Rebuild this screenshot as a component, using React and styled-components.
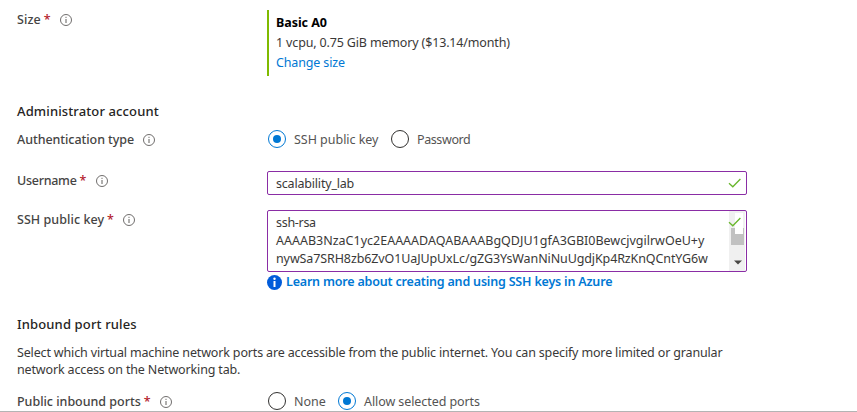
import React from 'react';
import styled, { createGlobalStyle } from 'styled-components';

const GlobalStyle = createGlobalStyle`
  *, *::before, *::after { box-sizing: border-box; }
  body {
    margin: 0;
    background: #fff;
    color: #3a3938;
    font-family: "Noto Sans", "Open Sans", sans-serif;
    font-size: 12.5px;
    line-height: 20px;
  }
`;

const Page = styled.main`
  display: flex;
  flex-direction: column;
  height: 412px;
  overflow: hidden;
  padding: 10px 0 0 17px;
  border-bottom: 1px solid #b4b4b4;
`;

const Text = styled.span`
  letter-spacing: ${(p) => p.$track || 0}px;
  white-space: nowrap;
`;

const Row = styled.div`
  display: grid;
  grid-template-columns: 250px 480px;
  flex: none;
  margin-top: ${(p) => p.$gap || 0}px;
`;

const Label = styled.div`
  display: flex;
  align-items: center;
  height: 20px;
  color: #454443;
  font-weight: 500;
`;

const Required = styled.span`
  width: 7px;
  margin-left: 3px;
  color: #b3202c;
  font-weight: 500;
`;

const InfoSvg = styled.svg`
  flex: none;
  width: 12px;
  height: 12px;
  margin-left: ${(p) => p.$gap}px;
  overflow: visible;
`;

const Heading = styled.h2`
  flex: none;
  height: 20px;
  margin: ${(p) => p.$gap}px 0 0;
  color: #252423;
  font-size: 13px;
  font-weight: 500;
  line-height: 20px;
  letter-spacing: ${(p) => p.$track}px;
`;

const SizeCard = styled.div`
  display: flex;
  flex-direction: column;
  height: 66px;
  padding: 3px 0 0 7px;
  border-left: 2px solid #7fba00;
`;

const SizeName = styled(Text)`
  color: #000;
  font-weight: 700;
`;

const Link = styled.a`
  color: #0078d4;
  letter-spacing: ${(p) => p.$track || 0}px;
  font-weight: ${(p) => (p.$strong ? 600 : 400)};
  white-space: nowrap;
`;

const Options = styled.div`
  display: flex;
  align-items: center;
  height: 18px;
  padding-left: 1px;
`;

const Option = styled.label`
  display: flex;
  align-items: center;
  height: 18px;
  width: ${(p) => p.$width}px;
  gap: 8px;
  color: #555453;
`;

const OptionText = styled(Text)`
  padding-top: 2px;
`;

const Radio = styled.span`
  display: grid;
  place-items: center;
  flex: none;
  width: 18px;
  height: 18px;
  border: 1px solid ${(p) => (p.$on ? '#0078d4' : '#323130')};
  border-radius: 50%;
  &::after {
    content: "";
    width: 8px;
    height: 8px;
    border-radius: 50%;
    background: ${(p) => (p.$on ? '#0078d4' : 'transparent')};
  }
`;

const Field = styled.div`
  position: relative;
  display: flex;
  justify-content: space-between;
  height: ${(p) => p.$height}px;
  padding-left: 8px;
  border: 1px solid #8a2da5;
  border-radius: 2px;
  line-height: ${(p) => p.$line}px;
`;

const KeyLines = styled.div`
  display: flex;
  flex-direction: column;
  padding-top: 3px;
`;

const Scrollbar = styled.div`
  display: flex;
  flex-direction: column;
  align-items: center;
  justify-content: space-between;
  width: 16px;
  height: 60px;
  margin-right: 1px;
  padding: 17px 1px 6px 2px;
  background: #f0f0f0;
`;

const Thumb = styled.div`
  width: 13px;
  height: 17px;
  background: #c1c1c1;
`;

const CheckBacking = styled.span`
  position: absolute;
  top: 2px;
  right: 3px;
  width: 8px;
  height: 21px;
  background: #fff;
`;

const CheckSvg = styled.svg`
  position: absolute;
  top: 6px;
  right: 4px;
  width: 14px;
  height: 10px;
`;

const Help = styled.div`
  display: flex;
  align-items: center;
  gap: 4px;
  flex: none;
  height: 20px;
  padding-left: 250px;
`;

const Paragraph = styled.p`
  display: flex;
  flex-direction: column;
  flex: none;
  margin: 10px 0 0;
  line-height: 17px;
`;

function Info({ gap = 9 }) {
  return (
    <InfoSvg viewBox="0 0 12 12" $gap={gap}>
      <circle cx="6" cy="6" r="5.5" fill="none" stroke="#605e5c" strokeWidth="0.9" />
      <path d="M6 5v4M6 2.8v1.1" stroke="#605e5c" strokeWidth="1" />
    </InfoSvg>
  );
}

function Check() {
  return (
    <CheckSvg viewBox="0 0 14 10">
      <path d="M1 5.2 4.8 8.8 12.4 1" fill="none" stroke="#68b62c" strokeWidth="1.3" />
    </CheckSvg>
  );
}

function FieldLabel({ text, track, required, gap }) {
  return (
    <Label>
      <Text $track={track}>{text}</Text>
      {required && <Required>*</Required>}
      <Info gap={gap} />
    </Label>
  );
}

function RadioOption({ on, width, track, children }) {
  return (
    <Option $width={width}>
      <Radio $on={on} />
      <OptionText $track={track}>{children}</OptionText>
    </Option>
  );
}

export default function App() {
  return (
    <>
      <GlobalStyle />
      <Page>
        <Row>
          <FieldLabel text="Size" track={0.1} required />
          <SizeCard>
            <SizeName $track={-0.05}>Basic A0</SizeName>
            <Text $track={-0.155}>1 vcpu, 0.75 GiB memory ($13.14/month)</Text>
            <Link $track={-0.14}>Change size</Link>
          </SizeCard>
        </Row>

        <Heading $gap={25} $track={0.12}>Administrator account</Heading>
        <Row $gap={9}>
          <FieldLabel text="Authentication type" track={-0.06} gap={9} />
          <Options>
            <RadioOption on width={123} track={-0.03}>SSH public key</RadioOption>
            <RadioOption track={-0.4}>Password</RadioOption>
          </Options>
        </Row>

        <Row $gap={21}>
          <FieldLabel text="Username" track={-0.28} required />
          <Field $height={24} $line={23}>
            <Text $track={-0.19}>scalability_lab</Text>
            <Check />
          </Field>
        </Row>

        <Row $gap={15}>
          <FieldLabel text="SSH public key" track={0.05} required />
          <Field $height={62} $line={18}>
            <KeyLines>
              <Text $track={-0.3}>ssh-rsa</Text>
              <Text $track={0}>AAAAB3NzaC1yc2EAAAADAQABAAABgQDJU1gfA3GBI0BewcjvgilrwOeU+y</Text>
              <Text $track={-0.11}>nywSa7SRH8zb6ZvO1UaJUpUxLc/gZG3YsWanNiNuUgdjKp4RzKnQCntYG6w</Text>
            </KeyLines>
            <Scrollbar>
              <Thumb />
              <svg width="8" height="5" viewBox="0 0 8 5">
                <path d="M0 0.5h8L4 4.5z" fill="#484644" />
              </svg>
            </Scrollbar>
            <CheckBacking />
            <Check />
          </Field>
        </Row>
        <Help>
          <svg width="15" height="15" viewBox="0 0 15 15">
            <circle cx="7.5" cy="7.5" r="7.5" fill="#015cda" />
            <circle cx="7.5" cy="3.7" r="1.2" fill="#fff" />
            <path d="M7.5 6v6" stroke="#fff" strokeWidth="2" />
          </svg>
          <Link $strong $track={-0.19}>Learn more about creating and using SSH keys in Azure</Link>
        </Help>

        <Heading $gap={22} $track={0.14}>Inbound port rules</Heading>
        <Paragraph>
          <Text $track={-0.155}>
            Select which virtual machine network ports are accessible from the public internet. You can specify more limited or granular
          </Text>
          <Text $track={-0.15}>network access on the Networking tab.</Text>
        </Paragraph>
        <Row $gap={14}>
          <FieldLabel text="Public inbound ports" track={-0.02} required />
          <Options>
            <RadioOption width={70} track={0}>None</RadioOption>
            <RadioOption on track={-0.08}>Allow selected ports</RadioOption>
          </Options>
        </Row>
      </Page>
    </>
  );
}
